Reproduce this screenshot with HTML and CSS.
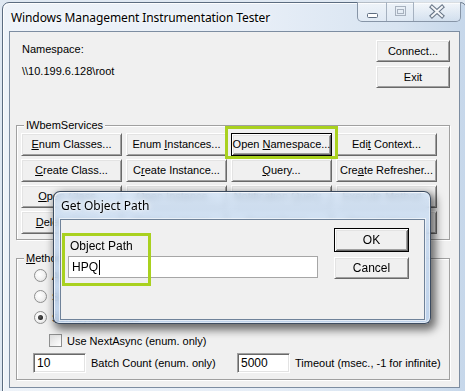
FILE: index.html
```html
<!DOCTYPE html>
<html>
<head>
<meta charset="utf-8">
<title>Windows Management Instrumentation Tester</title>
<link rel="stylesheet" href="styles.css">
</head>
<body>
<div class="window">
  <div class="titlebar">
    <span class="title">Windows Management Instrumentation Tester</span>
    <div class="caption">
      <span class="cbtn cmin"><svg width="29" height="19" viewBox="0 0 29 19"><rect x="9.5" y="11.5" width="10" height="4" rx="1" fill="#fff" stroke="#5e6d80"/></svg></span>
      <span class="cbtn cmax"><svg width="27" height="19" viewBox="0 0 27 19"><rect x="8.5" y="4.5" width="10" height="9" fill="none" stroke="#a7b1be"/><rect x="10.5" y="7.5" width="6" height="4" fill="none" stroke="#a7b1be"/></svg></span>
      <span class="cbtn cclose"><svg width="46" height="19" viewBox="0 0 46 19"><path d="M18 5 L28 14 M28 5 L18 14" stroke="#6b7889" stroke-width="4.2" stroke-linecap="square"/><path d="M18 5 L28 14 M28 5 L18 14" stroke="#f4f6f9" stroke-width="2" stroke-linecap="square"/></svg></span>
    </div>
  </div>

  <div class="client">
    <div class="top">
      <div class="ns">
        <div class="nsline">Namespace:</div>
        <div class="nsline">\\10.199.6.128\root</div>
      </div>
      <div class="topbtns">
        <div class="btn"><span>Connect...</span></div>
        <div class="btn"><span>Exit</span></div>
      </div>
    </div>

    <div class="group g1">
      <span class="legend">IWbemServices</span>
      <div class="grid">
        <div class="btn"><span><u>E</u>num Classes...</span></div>
        <div class="btn"><span>Enum <u>I</u>nstances...</span></div>
        <div class="btn btn-focus"><span>Open <u>N</u>amespace...</span></div>
        <div class="btn"><span>Edi<u>t</u> Context...</span></div>
        <div class="btn"><span><u>C</u>reate Class...</span></div>
        <div class="btn"><span>C<u>r</u>eate Instance...</span></div>
        <div class="btn"><span><u>Q</u>uery...</span></div>
        <div class="btn"><span>Cre<u>a</u>te Refresher...</span></div>
        <div class="btn"><span><u>O</u>pen Class...</span></div>
        <div class="btn"><span>Open Instance...</span></div>
        <div class="btn"><span>Notification Query...</span></div>
        <div class="btn"><span>Execute Method...</span></div>
        <div class="btn"><span><u>D</u>elete Class...</span></div>
        <div class="btn"><span>Delete Instance...</span></div>
        <div class="btn"><span>Event Query...</span></div>
        <div class="btn"><span>Open Instance...</span></div>
      </div>
      <div class="hl hl-ns"></div>
    </div>

    <div class="group g2">
      <span class="legend"><u>M</u>ethod Invocation Options</span>
      <div class="radios">
        <div class="radiorow"><span class="radio"></span><span>Asynchronous</span></div>
        <div class="radiorow"><span class="radio"></span><span>Synchronous</span></div>
        <div class="radiorow"><span class="radio checked"></span><span>Semisynchronous</span></div>
      </div>
      <div class="checkrow"><span class="check"></span><span>Use NextAsync (enum. only)</span></div>
      <div class="fieldrow">
        <div class="tbox small">10</div>
        <span class="flabel w1">Batch Count (enum. only)</span>
        <div class="tbox small">5000</div>
        <span class="flabel">Timeout (msec., -1 for infinite)</span>
      </div>
    </div>
  </div>

  <div class="dialog">
    <div class="dtitle">Get Object Path</div>
    <div class="dclient">
      <div class="dleft">
        <div class="dlabel">Object Path</div>
        <div class="tbox wide">HPQ<span class="caret"></span></div>
      </div>
      <div class="dright">
        <div class="btn btn-default"><span>OK</span></div>
        <div class="btn btn-cancel"><span>Cancel</span></div>
      </div>
      <div class="hl hl-op"></div>
    </div>
  </div>
</div>
</body>
</html>
```

FILE: styles.css
```css
* { box-sizing: border-box; }
html, body { margin: 0; padding: 0; }
body {
  width: 465px;
  height: 391px;
  overflow: hidden;
  background: #dfe8f2;
  font-family: "Liberation Sans", Arial, sans-serif;
  font-size: 11px;
  color: #000;
}
u { text-decoration: underline; text-underline-offset: 1px; }

.window {
  position: relative;
  margin: 2px 0 0 2px;
  width: 465px;
  height: 400px;
  border: 1px solid #5b6c80;
  border-radius: 7px 7px 0 0;
  background: linear-gradient(90deg, #eef3f9 0%, #e7eef7 55%, #d8e4f1 85%, #c6d7ea 100%);
  box-shadow: inset 1px 1px 0 rgba(255,255,255,.85);
}

.titlebar {
  display: flex;
  align-items: center;
  height: 28px;
  padding-left: 8px;
}
.title {
  font-family: "Noto Sans", "Open Sans", sans-serif;
  font-size: 12px;
  color: #000;
  text-shadow: 0 0 6px #fff, 0 0 4px #fff;
  letter-spacing: -0.1px;
}
.caption {
  display: flex;
  align-self: flex-start;
  margin: -1px 5px 0 auto;
  height: 20px;
  border: 1px solid #8795a7;
  border-top: none;
  border-radius: 0 0 5px 5px;
  overflow: hidden;
  background: linear-gradient(180deg, rgba(255,255,255,.55), rgba(230,238,247,.5));
}
.cbtn { display: block; height: 19px; }
.cbtn svg { display: block; }
.cmin { width: 29px; border-right: 1px solid #a5b1c0; }
.cmax { width: 27px; border-right: 1px solid #a5b1c0; }
.cclose { width: 46px; background: linear-gradient(180deg, rgba(255,255,255,.5), rgba(200,215,232,.4)); }

.client {
  margin: 0 6px;
  height: 357px;
  border: 1px solid #7d8da1;
  background: #f0f0f0;
  display: flex;
  flex-direction: column;
}

.top {
  display: flex;
  justify-content: space-between;
  padding: 8px 9px 0 12px;
}
.ns { padding-top: 3px; display: flex; flex-direction: column; gap: 9px; }
.nsline { line-height: 13px; }
.topbtns { display: flex; flex-direction: column; gap: 4px; }
.topbtns .btn { width: 74px; height: 22px; }

.btn {
  display: flex;
  align-items: center;
  justify-content: center;
  background: #f0f0f0;
  border: 1px solid;
  border-color: #fff #696969 #696969 #fff;
  box-shadow: inset 1px 1px 0 #e3e3e3, inset -1px -1px 0 #a0a0a0;
  white-space: nowrap;
  line-height: 13px;
}
.btn > span { white-space: pre; }
.btn-focus, .btn-default {
  border-color: #000;
  box-shadow: inset 1px 1px 0 #fff, inset -1px -1px 0 #696969, inset 2px 2px 0 #e3e3e3, inset -2px -2px 0 #a0a0a0;
}

.group {
  position: relative;
  border: 1px solid #a0a0a0;
  box-shadow: 1px 1px 0 #fff, inset 1px 1px 0 #fff;
  margin-left: 6px;
  width: 434px;
}
.legend {
  position: absolute;
  top: -7px;
  left: 7px;
  padding: 0 2px;
  background: #f0f0f0;
  line-height: 13px;
}
.g1 {
  margin-top: 37px;
  padding: 7px 3px 5px 4px;
}
.grid {
  display: grid;
  grid-template-columns: repeat(4, 101px);
  grid-auto-rows: 23px;
  column-gap: 4px;
  row-gap: 3px;
}
.hl {
  position: absolute;
  border: 3px solid #a9d11f;
}
.hl-ns { left: 208px; top: 0px; width: 113px; height: 33px; }

.g2 {
  margin-top: 18px;
  height: 122px;
  padding: 6px 0 0 17px;
}
.radiorow {
  display: flex;
  align-items: center;
  height: 21px;
  gap: 5px;
}
.radio {
  width: 13px;
  height: 13px;
  border-radius: 50%;
  border: 1px solid #8e8f8f;
  background: radial-gradient(circle at 40% 40%, #ffffff 0%, #f2f2f2 50%, #d8d8d8 100%);
  position: relative;
}
.radio.checked::after {
  content: "";
  position: absolute;
  left: 3px;
  top: 3px;
  width: 5px;
  height: 5px;
  border-radius: 50%;
  background: radial-gradient(circle at 40% 40%, #5a5a5a, #0b0b0b);
}
.checkrow {
  display: flex;
  align-items: center;
  gap: 5px;
  margin: 6px 0 0 15px;
  height: 13px;
}
.check {
  width: 13px;
  height: 13px;
  border: 1px solid #8e8f8f;
  background: linear-gradient(135deg, #dcdcdc, #fff);
}
.fieldrow {
  display: flex;
  align-items: center;
  margin: 6px 0 0 -1px;
  height: 20px;
}
.tbox {
  background: #fff;
  border: 1px solid;
  border-color: #a0a0a0 #fff #fff #a0a0a0;
  box-shadow: inset 1px 1px 0 #696969, inset -1px -1px 0 #e3e3e3;
  padding: 0 3px;
  display: flex;
  align-items: center;
  line-height: 13px;
  font-size: 12px;
}
.tbox.small { width: 53px; height: 20px; }
.flabel { margin-left: 5px; white-space: nowrap; }
.flabel.w1 { width: 146px; }

.dialog {
  position: absolute;
  left: 50px;
  top: 188px;
  width: 378px;
  height: 133px;
  border: 1px solid rgba(35, 50, 70, .85);
  border-radius: 7px 7px 6px 6px;
  background: linear-gradient(180deg, rgba(208,226,246,.80) 0%, rgba(192,213,238,.82) 40%, rgba(182,205,233,.86) 100%);
  -webkit-backdrop-filter: blur(3px);
  backdrop-filter: blur(3px);
  box-shadow: inset 1px 1px 0 rgba(255,255,255,.75), inset -1px -1px 0 rgba(255,255,255,.5), 3px 4px 9px 2px rgba(0,0,0,.55);
  padding: 0 5px 3px 6px;
}
.dtitle {
  height: 27px;
  display: flex;
  align-items: center;
  padding-left: 1px;
  font-family: "Noto Sans", "Open Sans", sans-serif;
  font-size: 12px;
  text-shadow: 0 0 6px #fff, 0 0 3px #fff;
}
.dclient {
  position: relative;
  height: 101px;
  border: 1px solid #6f8299;
  box-shadow: 0 0 0 1px rgba(255,255,255,.6);
  background: #f0f0f0;
  display: flex;
  align-items: flex-start;
}
.dleft { padding: 20px 0 0 7px; display: flex; flex-direction: column; gap: 3px; }
.dlabel { line-height: 13px; padding-left: 2px; font-size: 12px; }
.tbox.wide {
  width: 250px;
  height: 22px;
  border: 1px solid #a6a6a6;
  box-shadow: none;
  font-size: 12px;
}
.caret { display: inline-block; width: 1px; height: 15px; background: #000; margin-left: 1px; }
.dright {
  margin: 8px 15px 0 auto;
  display: flex;
  flex-direction: column;
  gap: 5px;
}
.dright .btn { width: 75px; font-size: 12px; }
.btn-default { height: 24px; }
.btn-cancel { height: 22px; }
.hl-op { left: 1px; top: 13px; width: 89px; height: 53px; }
```
